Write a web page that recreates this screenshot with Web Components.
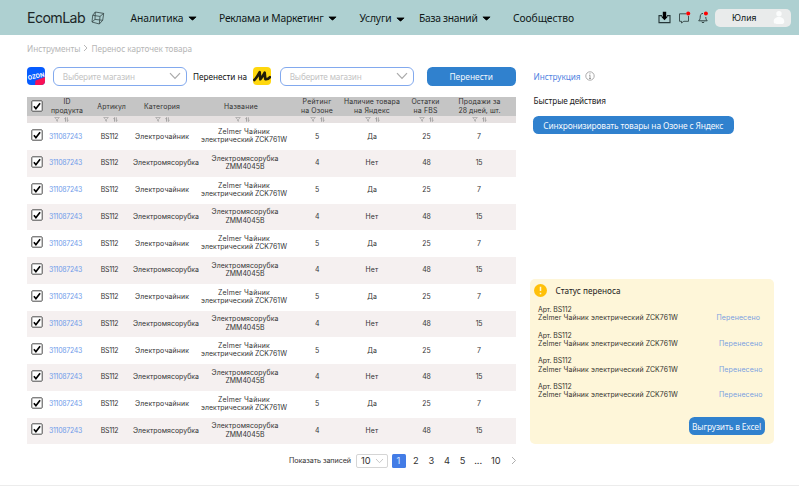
<!DOCTYPE html>
<html lang="ru"><head><meta charset="utf-8"><title>EcomLab</title>
<style>
html,body{margin:0;background:#fff}
body{width:799px;height:486px;overflow:hidden;font-family:"Noto Sans","Open Sans",sans-serif;color:#222}
</style></head><body><ecom-app></ecom-app>
<script>
function define(name, html, after){
  customElements.define(name, class extends HTMLElement{
    constructor(){super();this.attachShadow({mode:'open'})}
    connectedCallback(){
      this.shadowRoot.innerHTML = typeof html==='function' ? html(this) : html;
      if(after) after(this);
    }
  });
}
const caret = (x,t=0)=>`<svg style="margin-left:${x}px;margin-top:${t+1}px" width="9" height="5" viewBox="0 0 9 5"><path d="M.9.9h7.2L5.2 3.700Q4.500 4.300 3.800 3.700z" fill="#000" stroke="#000" stroke-width=".7" stroke-linejoin="round"/></svg>`;

define('top-bar', `<style>
:host{display:flex;align-items:center;height:35.4px;background:#aed0d1;padding-left:27px;box-sizing:border-box;font-size:10.3px;color:#101818}
nav{display:flex;align-items:center;height:35px}svg{display:block;flex:none}
.logo{font:400 14.2px Inter,sans-serif;color:#1c2728}
.user{display:flex;align-items:center;box-sizing:border-box;width:76px;height:18px;border-radius:5px;background:#e9ebeb;padding-left:17px;margin-left:6.500px}
</style>
<fit-text class="logo" w="58">EcomLab</fit-text>
<svg style="margin-left:6px" width="14" height="14" viewBox="0 0 14 14" fill="none" stroke="#344" stroke-width=".8" stroke-linejoin="round"><path d="M4.3 1 12.7 2.4 11.7 9.3 8.3 13 1 11 1.7 4.3zM1.7 4.3 9 5.4 12.7 2.4M9 5.4 8.3 13M4.3 1 4 8.4 1 11M4 8.4 11.7 9.3"/></svg>
<nav style="margin-left:25.5px"><fit-text w="53">Аналитика</fit-text>${caret(4)}</nav>
<nav style="margin-left:22.5px"><fit-text w="104.5">Реклама и Маркетинг</fit-text>${caret(4.5)}</nav>
<nav style="margin-left:22.5px"><fit-text w="32">Услуги</fit-text>${caret(4.5,3)}</nav>
<nav style="margin-left:14px"><fit-text w="58.5">База знаний</fit-text>${caret(4.5)}</nav>
<nav style="margin-left:22px"><fit-text w="61">Сообщество</fit-text></nav>
<svg style="margin-left:84px" width="13" height="13" viewBox="0 0 13 13"><path d="M4 4.6H1v7h11v-7H9" fill="none" stroke="#263638" stroke-width="1.1"/><path d="M4.800 .8h3.400v4.800h1.800L6.500 9.300 3 5.600h1.800z" fill="#000"/></svg>
<svg style="margin-left:6.500px" width="13" height="13" viewBox="0 0 13 13"><path d="M8 2.8H1.5v7.5h2V12l2.3-1.7h4.7V5" fill="none" stroke="#344" stroke-width=".9"/><circle cx="10.2" cy="2.4" r="2" fill="#f00"/></svg>
<svg style="margin-left:6px" width="12" height="13" viewBox="0 0 12 13"><path d="M6 2.4C3.8 2.6 3.2 4 3.2 6.2 3.2 8 2.7 8.6 1.7 9.8h8.5C9.2 8.6 8.8 8 8.8 6M4.7 11q1.3 1.5 2.6 0" fill="none" stroke="#344" stroke-width="1"/><circle cx="8.9" cy="2.4" r="2" fill="#f00"/></svg>
<div class="user"><fit-text w="24.5" style="font:8.900px Inter,sans-serif">Юлия</fit-text><svg style="margin-left:16px" width="12" height="15" viewBox="0 0 12 15" fill="#fbfcfc"><circle cx="6" cy="3.8" r="2.7"/><path d="M.7 11.5C.7 8.5 3 7 6 7s5.300 1.500 5.300 4.500S9.200 14 6 14 .7 14 .7 11.500z"/></svg></div>`);

define('shop-select', `<style>
:host{display:flex;align-items:center;box-sizing:border-box;width:133.500px;height:18.500px;border:1px solid #82a9ee;border-radius:6px;padding:0 5px 0 8.500px;justify-content:space-between;font-size:8.200px;color:#c3c3c3;flex:none}
</style><fit-text w="72">Выберите магазин</fit-text><svg width="12" height="8" viewBox="0 0 12 8"><path d="M1 1.200 6 6.500 11 1.200" fill="none" stroke="#aaa" stroke-width="1.200"/></svg>`);

define('blue-button', el=>`<style>
:host{display:flex;align-items:center;justify-content:center;box-sizing:border-box;height:18.300px;border-radius:5.500px;background:#3081ce;color:#f4f8fd;font-size:8.400px;flex:none}
</style><fit-text w="${el.getAttribute('tw')}">${el.getAttribute('label')}</fit-text>`);

define('tick-box', `<style>:host{display:block;width:12px;height:12px}svg{display:block}</style>
<svg width="12" height="12" viewBox="0 0 12 12"><rect x=".8" y=".8" width="10.400" height="10.400" rx=".8" fill="#fff" stroke="#4c4c4c" stroke-width="1"/><path d="M2.900 6.300 4.900 8.700 9.100 3.200" fill="none" stroke="#000" stroke-width="1.700"/></svg>`);

define('sort-icons', `<style>:host{display:flex;gap:4px;justify-content:center;align-items:center;height:7px}svg{display:block}</style>
<svg width="6" height="5" viewBox="0 0 6 5"><path d="M.7.5h4.600L3.500 2.500V4.300L2.500 3.800V2.500z" fill="none" stroke="#999" stroke-width=".6"/></svg><svg width="5" height="5" viewBox="0 0 5 5"><path d="M1.500 4.700V.6L.4 1.700M3.300.3v4.100L4.500 3.300" fill="none" stroke="#888" stroke-width=".7"/></svg>`);

const cols='grid-template-columns:20px 38px 50px 60px 94px 56px 54px 54px 52px;';
const base=`:host{display:grid;${cols}box-sizing:border-box;width:489px;font-family:Inter,sans-serif}
div{display:flex;flex-direction:column;align-items:center;justify-content:center;min-width:0}`;
define('table-head', ()=>{
 const h=[[['ID',7],['продукта',32]],[['Артикул',28.500]],[['Категория',36]],[['Название',34]],[['Рейтинг',29],['на Озоне',32]],[['Наличие товара',56],['на Яндекс',36]],[['Остатки',28],['на FBS',24]],[['Продажи за',42],['28 дней, шт.',42]]];
 const off=[2,3,-6,-2,0,0,-1,1];
 return `<style>${base}:host{grid-template-rows:19.400px 7px;background:linear-gradient(#c5c5c5 19.400px,#e6e1e1 19.400px);font-size:6.900px;line-height:8.200px;color:#333}</style><div style="padding-bottom:1px"><tick-box></tick-box></div>`+
 h.map((c,i)=>`<div style="margin-left:${off[i]}px">${c.map(x=>`<fit-text w="${x[1]}">${x[0]}</fit-text>`).join('')}</div>`).join('')+'<div></div>'+
 [-10,0,-6,0,0,0,0,0].map(o=>`<div style="margin-left:${o}px"><sort-icons></sort-icons></div>`).join('')});
define('product-row', el=>{
 const o=el.hasAttribute('odd'), f=(t,w,s='')=>`<div style="${s}"><fit-text w="${w}">${t}</fit-text></div>`;
 return `<style>${base}:host{height:26.750px;font-size:6.900px;line-height:8.200px;color:#333;background:${o?'#f5f0f0':'#fff'}}</style>
 <div style="padding-bottom:3.500px"><tick-box></tick-box></div>${f('311087243',33,'color:#6f9bea;margin-left:-1px')}${f('BS112',17.500,'margin-left:-1px')}`+
 f(o?'Электромясорубка':'Электрочайник',o?66:54,o?'margin-left:2px':'margin-left:-6px')+
 `<div style="margin-left:${o?6:4}px;padding-bottom:1px">${o?'<fit-text w="67">Электромясорубка</fit-text><fit-text w="39">ZMM4045B</fit-text>':'<fit-text w="52">Zelmer Чайник</fit-text><fit-text w="86">электрический ZCK761W</fit-text>'}</div>`+
 f(o?4:5,4)+f(o?'Нет':'Да',o?13:9.500)+f(o?48:25,8.500,'margin-left:1px')+f(o?15:7,o?6.500:4)});

define('page-nav', `<style>
:host{display:flex;align-items:center;height:14px;margin:9.200px 0 0 262px;width:232px;font:9.300px Inter,sans-serif;color:#333}
.sel{display:flex;align-items:center;justify-content:space-between;box-sizing:border-box;width:31.500px;height:14px;border:1px solid #d5d5d5;border-radius:2px;margin:0 4px 0 5px;padding:0 2.500px 0 4px}
.on{width:14px;height:14px;background:#437ce6;color:#dce8ff;border-radius:1.500px;display:flex;align-items:center;justify-content:center}
.n{width:15.600px;display:flex;justify-content:center}svg{display:block}
</style><fit-text w="62" style="font-size:7.200px">Показать записей</fit-text><div class="sel"><fit-text w="9.500">10</fit-text><svg width="9" height="6" viewBox="0 0 9 6"><path d="M1 1 4.500 4.700 8 1" fill="none" stroke="#bbb" stroke-width=".8"/></svg></div><div class="on">1</div><div class="n" style="margin-left:2.500px">2</div><div class="n">3</div><div class="n">4</div><div class="n">5</div><div class="n">...</div><div class="n" style="margin-left:2px">10</div><svg style="margin-left:7px" width="6" height="9" viewBox="0 0 6 9"><path d="M1 1 4.500 4.500 1 8" fill="none" stroke="#999" stroke-width=".8"/></svg>`);

define('status-panel', ()=>`<style>
:host{display:flex;flex-direction:column;box-sizing:border-box;width:244px;height:165px;border-radius:5px;background:#fef6d9;padding:4.500px 9px 8.500px 4px}
.t{display:flex;align-items:center;height:14px;gap:9px;font-size:8.200px}
.i{height:25.600px;padding-left:4.500px;box-sizing:border-box;font:6.900px/8.500px Inter,sans-serif;color:#35332e}
.r{display:flex;justify-content:space-between}.l{color:#7a9fe0}svg{display:block}
</style><div class="t"><svg width="13" height="13" viewBox="0 0 13 13"><circle cx="6.500" cy="6.500" r="6.500" fill="#ffc008"/><path d="M6.500 2.800v4.300M6.500 8.800v1.400" stroke="#fff6d9" stroke-width="1.500"/></svg><fit-text w="65">Статус переноса</fit-text></div><div style="height:8.700px"></div>`+
[4.500,2,2,2].map(m=>`<div class="i"><fit-text w="33.500">Арт. BS112</fit-text><div class="r"><fit-text w="140">Zelmer Чайник электрический ZCK761W</fit-text><fit-text class="l" w="43.500" style="font-size:7px;margin-right:${m}px">Перенесено</fit-text></div></div>`).join('')+
`<blue-button style="width:76px;margin-top:auto;align-self:flex-end" label="Выгрузить в Excel" tw="69"></blue-button>`);

define('ecom-app', ()=>`<style>
:host{display:flex;flex-direction:column;height:486px;box-sizing:border-box;border-bottom:1px solid #ececec}
.crumb{display:flex;align-items:center;height:26px;padding-left:27px;font-size:8.200px;color:#b6b6b6}
main{display:grid;grid-template-columns:489px 244px;column-gap:13.500px;padding:5.600px 0 0 27px}
.bar{display:flex;align-items:center;height:19px;font-size:8.200px}
.table{margin-top:11px}.right{display:flex;flex-direction:column;font-size:8.200px}
.right>.a{display:flex;align-items:center;height:19px;padding-left:4px;color:#4f83df}
svg{display:block;flex:none}
</style><top-bar></top-bar>
<div class="crumb"><fit-text w="53.500">Инструменты</fit-text><svg style="margin:0 4px 0 2px" width="5" height="8" viewBox="0 0 5 8"><path d="M1 1 4 4 1 7" fill="none" stroke="#b0b0b0" stroke-width=".9"/></svg><fit-text w="100.500">Перенос карточек товара</fit-text></div>
<main><section><div class="bar">
<svg width="18" height="18" viewBox="0 0 18 18"><defs><clipPath id="r"><rect width="18" height="18" rx="4"/></clipPath></defs><g clip-path="url(#r)"><rect width="18" height="18" fill="#075cff"/><path d="M8 18 8.500 13.500 18 10v8z" fill="#f91155"/></g><text x=".6" y="11.300" transform="rotate(-12 9 9)" font-family="Inter" font-size="6" font-weight="700" fill="#fff" textLength="16.800" lengthAdjust="spacingAndGlyphs">OZON</text></svg>
<shop-select style="margin-left:8.300px"></shop-select><fit-text w="54" style="margin:0 6.200px;color:#111">Перенести на</fit-text>
<svg width="18" height="18" viewBox="0 0 18 18"><rect width="18" height="18" rx="4" fill="#ffd70d"/><path d="M1.300 13C3.500 11 5.200 8 6.700 5.200L7.300 12.300Q9.500 10 11.700 5.600L12.300 12.200Q15 12.600 17 10.200" fill="none" stroke="#211c08" stroke-width="2.600" stroke-linejoin="round" stroke-linecap="round"/></svg>
<shop-select style="margin-left:9px"></shop-select><blue-button style="width:89px;margin-left:13px" label="Перенести" tw="43.500"></blue-button></div>
<div class="table"><table-head></table-head>${Array.from({length:12},(_,i)=>`<product-row ${i%2?'odd':''}></product-row>`).join('')}</div><page-nav></page-nav></section>
<section class="right"><div class="a"><fit-text w="47">Инструкция</fit-text><svg style="margin-left:4.500px" width="10" height="10" viewBox="0 0 10 10"><circle cx="5" cy="5" r="4.200" fill="none" stroke="#888" stroke-width=".7"/><path d="M5 2.300v1M5 4.200v3.500M4 7.500h2M4.200 4.300H5" stroke="#888" stroke-width=".8"/></svg></div>
<div class="a" style="height:30px;color:#222"><fit-text w="72.500">Быстрые действия</fit-text></div>
<blue-button style="width:200.500px;margin-left:3.500px" label="Синхронизировать товары на Озоне с Яндекс" tw="180"></blue-button>
<status-panel style="margin-top:144.500px"></status-panel></section></main>`);

/* One line of text whose tracking is adjusted to fill the width given in "w". */
define('fit-text', `<style>:host{display:block;flex:none;white-space:nowrap}span{display:inline-block}</style><span><slot></slot></span>`, el=>{
  const s=el.shadowRoot.querySelector('span'), w=+el.getAttribute('w'), n=el.textContent.length;
  el.style.width=w+'px';
  s.style.letterSpacing=((w-s.getBoundingClientRect().width)/n)+'px';
});
</script></body></html>
